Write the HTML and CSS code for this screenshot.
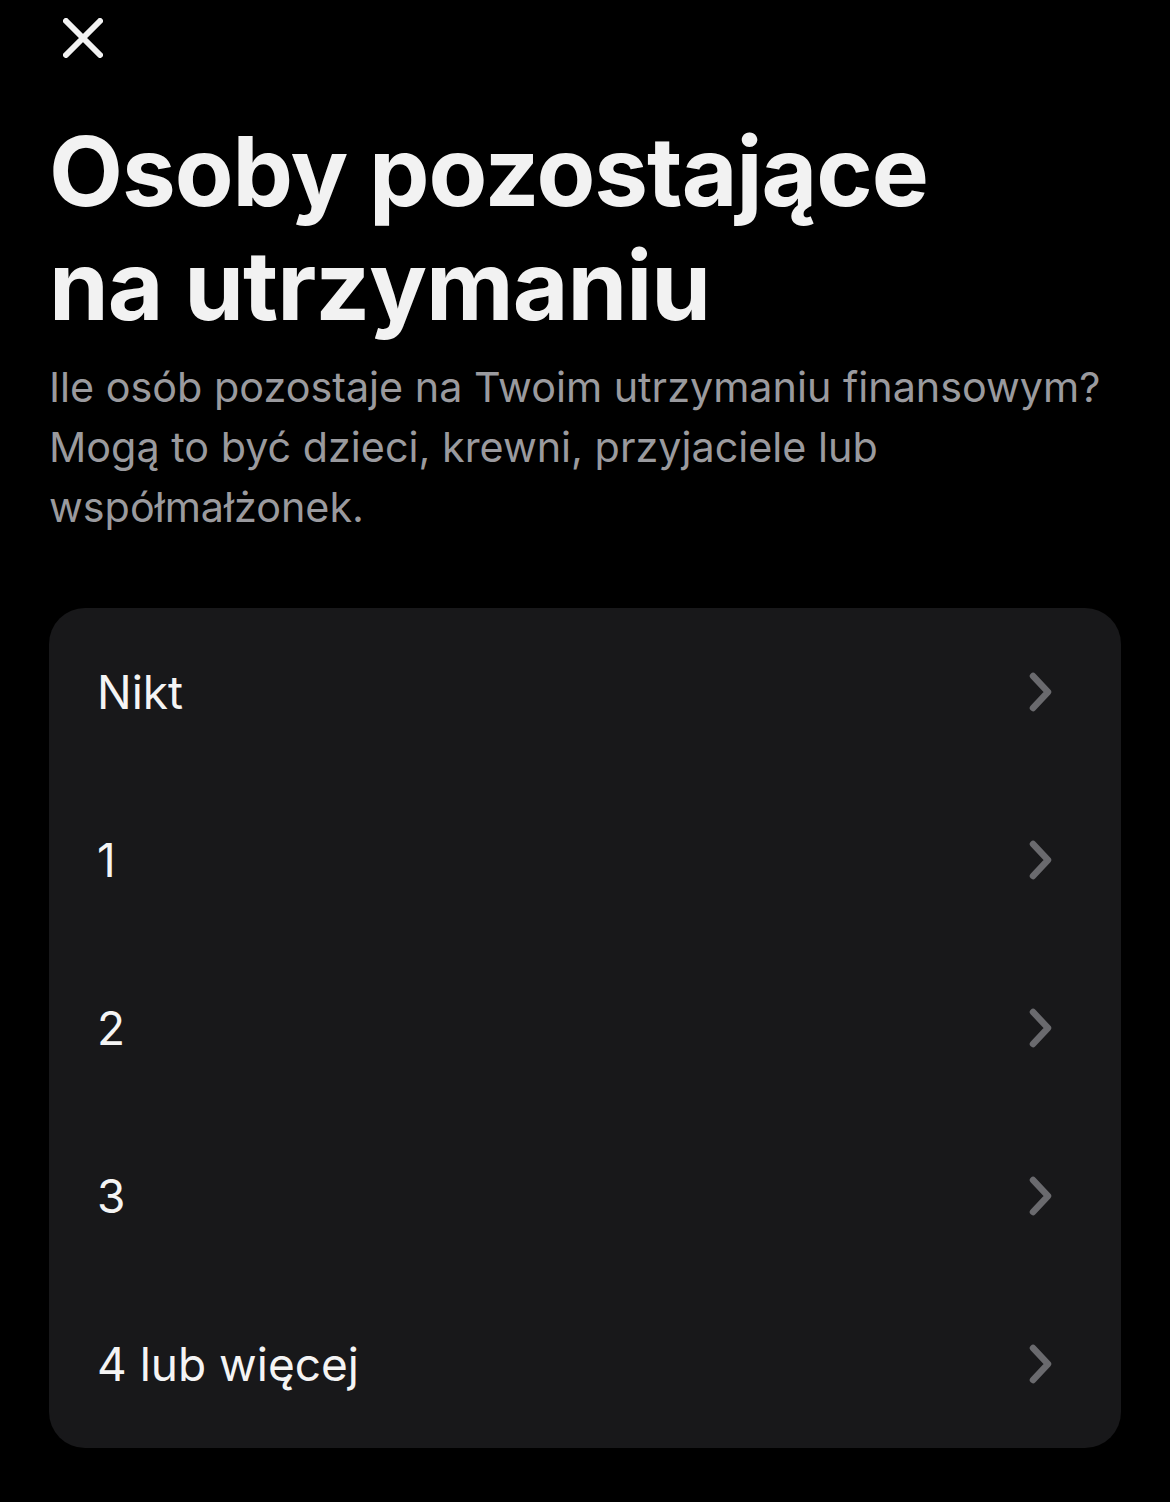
FILE: index.html
```html
<!DOCTYPE html>
<html lang="pl">
<head>
<meta charset="utf-8">
<title>Osoby pozostające na utrzymaniu</title>
<link rel="stylesheet" href="styles.css">
</head>
<body>
<div class="screen">
  <button class="close" aria-label="Zamknij">
    <svg width="40" height="40" viewBox="0 0 40 40"><path d="M3 3 L37 37 M37 3 L3 37" stroke="#f2f2f2" stroke-width="6" stroke-linecap="round" fill="none"/></svg>
  </button>
  <h1 class="title">Osoby pozostające na utrzymaniu</h1>
  <p class="subtitle">Ile osób pozostaje na Twoim utrzymaniu finansowym? Mogą to być dzieci, krewni, przyjaciele lub współmałżonek.</p>
  <ul class="options">
    <li class="option"><span>Nikt</span><svg class="chev" width="24" height="40" viewBox="0 0 24 40"><path d="M4 4 L19 20 L4 36" stroke="#6a6a6e" stroke-width="6.5" stroke-linecap="round" stroke-linejoin="round" fill="none"/></svg></li>
    <li class="option"><span>1</span><svg class="chev" width="24" height="40" viewBox="0 0 24 40"><path d="M4 4 L19 20 L4 36" stroke="#6a6a6e" stroke-width="6.5" stroke-linecap="round" stroke-linejoin="round" fill="none"/></svg></li>
    <li class="option"><span>2</span><svg class="chev" width="24" height="40" viewBox="0 0 24 40"><path d="M4 4 L19 20 L4 36" stroke="#6a6a6e" stroke-width="6.5" stroke-linecap="round" stroke-linejoin="round" fill="none"/></svg></li>
    <li class="option"><span>3</span><svg class="chev" width="24" height="40" viewBox="0 0 24 40"><path d="M4 4 L19 20 L4 36" stroke="#6a6a6e" stroke-width="6.5" stroke-linecap="round" stroke-linejoin="round" fill="none"/></svg></li>
    <li class="option"><span>4 lub więcej</span><svg class="chev" width="24" height="40" viewBox="0 0 24 40"><path d="M4 4 L19 20 L4 36" stroke="#6a6a6e" stroke-width="6.5" stroke-linecap="round" stroke-linejoin="round" fill="none"/></svg></li>
  </ul>
</div>
</body>
</html>
```

FILE: styles.css
```css
html, body {
  margin: 0;
  padding: 0;
  background: #000;
}
body {
  font-family: Inter, "Noto Sans", sans-serif;
  color: #f2f2f2;
}
.screen {
  width: 1170px;
  height: 1502px;
  box-sizing: border-box;
  padding: 18px 49px 0 49px;
}
.close {
  display: block;
  background: none;
  border: 0;
  padding: 0;
  margin: 0 0 0 14px;
  width: 40px;
  height: 40px;
}
.close svg { display: block; }
.title {
  margin: 56px 0 0 0;
  max-width: 1000px;
  font-size: 96px;
  font-weight: 700;
  line-height: 114px;
  letter-spacing: -1px;
  color: #f2f2f2;
}
.subtitle {
  margin: 15px 0 0 0;
  font-size: 41.3px;
  line-height: 60px;
  color: #9a9a9e;
  font-weight: 400;
}
.options {
  list-style: none;
  margin: 71px 0 0 0;
  padding: 0;
  width: 1072px;
  background: #18181a;
  border-radius: 36px;
}
.option {
  height: 168px;
  display: flex;
  align-items: center;
  justify-content: space-between;
  padding: 0 68px 0 48px;
  font-size: 46px;
  color: #f4f4f4;
}
.chev { display: block; }
```
